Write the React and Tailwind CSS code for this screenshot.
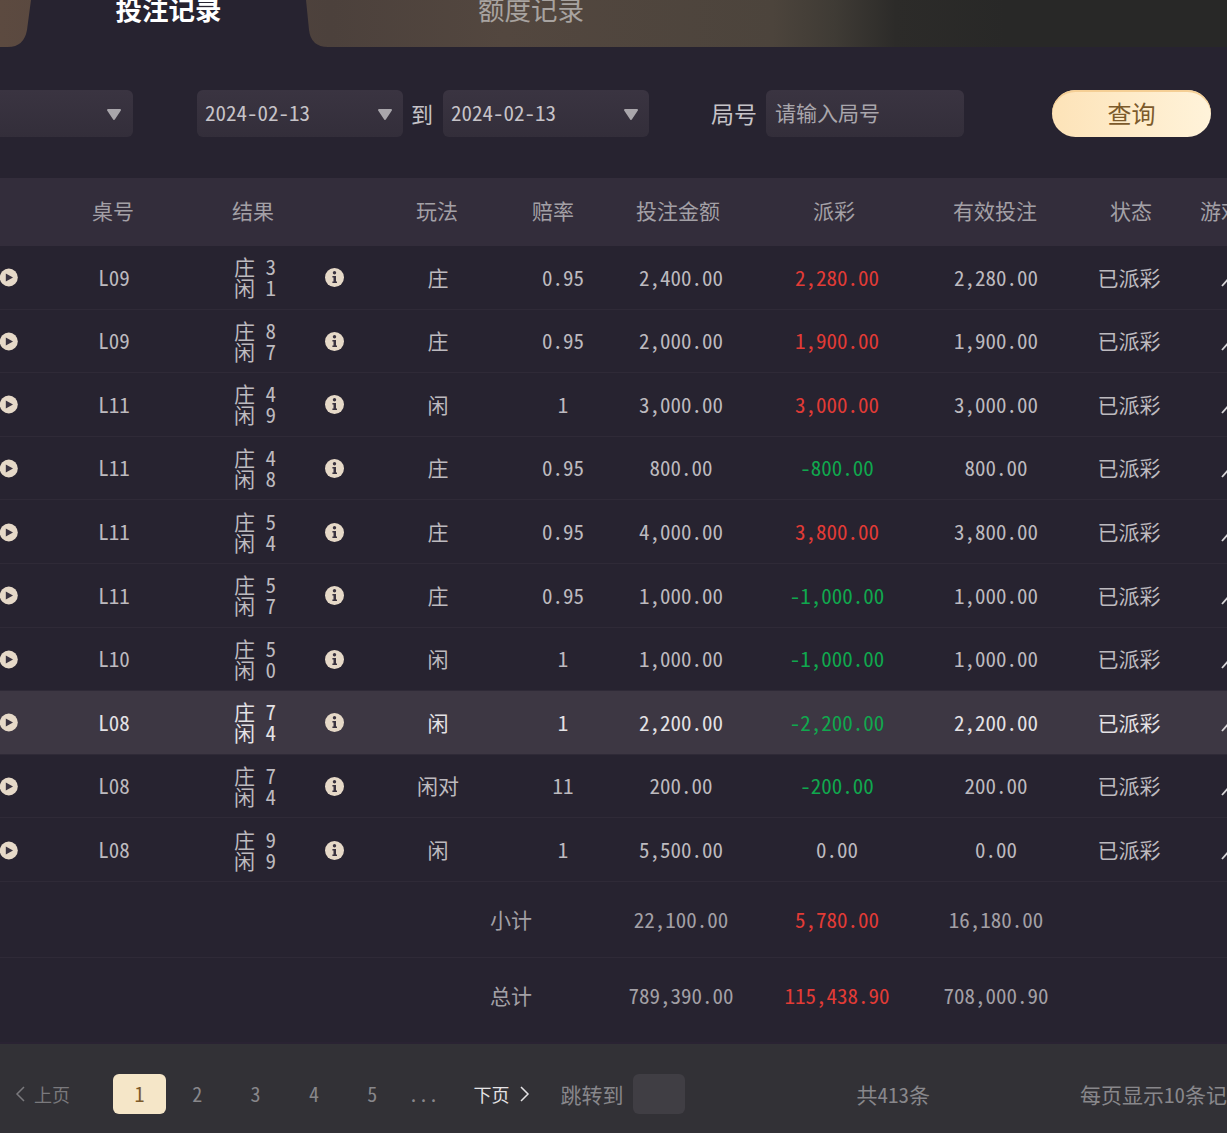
import React from "react";

const FONT = '"Noto Sans Mono CJK SC", "Noto Sans CJK SC", monospace';

const rows = [
  { table: "L09", bank: 3, player: 1, bet: "庄", odds: "0.95", amount: "2,400.00", payout: "2,280.00", valid: "2,280.00" },
  { table: "L09", bank: 8, player: 7, bet: "庄", odds: "0.95", amount: "2,000.00", payout: "1,900.00", valid: "1,900.00" },
  { table: "L11", bank: 4, player: 9, bet: "闲", odds: "1", amount: "3,000.00", payout: "3,000.00", valid: "3,000.00" },
  { table: "L11", bank: 4, player: 8, bet: "庄", odds: "0.95", amount: "800.00", payout: "-800.00", valid: "800.00" },
  { table: "L11", bank: 5, player: 4, bet: "庄", odds: "0.95", amount: "4,000.00", payout: "3,800.00", valid: "3,800.00" },
  { table: "L11", bank: 5, player: 7, bet: "庄", odds: "0.95", amount: "1,000.00", payout: "-1,000.00", valid: "1,000.00" },
  { table: "L10", bank: 5, player: 0, bet: "闲", odds: "1", amount: "1,000.00", payout: "-1,000.00", valid: "1,000.00" },
  { table: "L08", bank: 7, player: 4, bet: "闲", odds: "1", amount: "2,200.00", payout: "-2,200.00", valid: "2,200.00", active: true },
  { table: "L08", bank: 7, player: 4, bet: "闲对", odds: "11", amount: "200.00", payout: "-200.00", valid: "200.00" },
  { table: "L08", bank: 9, player: 9, bet: "闲", odds: "1", amount: "5,500.00", payout: "0.00", valid: "0.00" },
];

const payoutColor = (v) => {
  if (v.startsWith("-")) return "text-[#10a84e]";
  if (v === "0.00") return "";
  return "text-[#e23b36]";
};

const PlayIcon = () => (
  <svg width="19" height="19" viewBox="0 0 19 19" className="mt-px">
    <circle cx="8.8" cy="9.5" r="9" fill="#e6d9c8" />
    <path d="M5.8 5.4 L13 9.5 L5.8 13.6 Z" fill="#3a3340" />
  </svg>
);

const InfoIcon = () => (
  <svg width="19" height="19" viewBox="0 0 19 19" className="mt-px">
    <circle cx="9.5" cy="9.5" r="9.5" fill="#e6d9c8" />
    <circle cx="9.5" cy="4.8" r="1.7" fill="#3a3340" />
    <path d="M7.4 8 H11 V13.6 H12 V15 H7.4 V13.6 H8.5 V9.4 H7.4 Z" fill="#3a3340" />
  </svg>
);

const Arrow = () => (
  <svg width="10" height="20" viewBox="0 0 10 20" fill="none" stroke="#d8d5d8" strokeWidth="1.8">
    <path d="M1 19 L8 11" />
  </svg>
);

const Caret = () => (
  <svg width="16" height="13" viewBox="0 0 16 13" className="mt-[2px]">
    <path d="M2 2 H14 L8 11 Z" fill="#a9a6ab" stroke="#a9a6ab" strokeWidth="2" strokeLinejoin="round" />
  </svg>
);

const DateSelect = ({ value }) => (
  <div className="flex h-[47px] w-[206px] items-center justify-between rounded-md bg-gradient-to-b from-[#3a3441] to-[#332e3a] pl-2 pr-[10px] text-[21px] text-[#c6c3c8]">
    <span>{value}</span>
    <Caret />
  </div>
);

const Chevron = ({ dir, color }) => (
  <svg width="10" height="16" viewBox="0 0 10 16" fill="none" stroke={color} strokeWidth="1.5">
    <path d={dir === "left" ? "M9 1 L2 8 L9 15" : "M1 1 L8 8 L1 15"} />
  </svg>
);

const BODY_COLS = "grid-cols-[74px_80px_60px_80px_80px_128px_122px_114px_198px_120px_146px_58px]";
const HEAD_COLS = "grid-cols-[73px_80px_60px_80px_80px_128px_104px_146px_166px_156px_116px_11px_60px]";

export default function App() {
  return (
    <div
      className="h-[1133px] w-[1227px] overflow-hidden bg-[#272330] text-[21px]"
      style={{ fontFamily: FONT }}
    >
      {/* TABS */}
      <div className="relative flex h-[47px] bg-[linear-gradient(90deg,#5c4a40_0%,#4c413c_27%,#53473f_41%,#4c443c_63%,#3f3b35_68%,#2c2b29_73%,#282827_82%,#282827_100%)]">
        <div className="relative h-full w-[332px]">
          <svg className="absolute inset-0" width="332" height="47" viewBox="0 0 332 47">
            <path d="M31 0 L306 0 L309 30 Q311 47 328 47 L8 47 Q24 47 27 30 Z" fill="#272330" />
          </svg>
          <div className="relative flex h-[18px] items-center justify-center text-[26.5px] font-bold text-white pl-[5px]">
            投注记录
          </div>
        </div>
        <div className="flex h-[18px] w-[398px] items-center justify-center text-[26.5px] text-[#a8a3a0]">
          额度记录
        </div>
      </div>

      {/* FILTER */}
      <div className="flex h-[131px] items-center pt-[1px]">
        <div className="-ml-5 flex h-[47px] w-[153px] items-center justify-end rounded-md bg-gradient-to-b from-[#3a3441] to-[#332e3a] pr-[11px]">
          <Caret />
        </div>
        <div className="ml-16">
          <DateSelect value="2024-02-13" />
        </div>
        <span className="w-[38px] text-center text-[22px] text-[#c6c3c8]">到</span>
        <span className="w-[2px]" />
        <DateSelect value="2024-02-13" />
        <span className="ml-[62px] w-[46px] text-[23px] text-[#c6c3c8]">局号</span>
        <div className="ml-[9px] flex h-[47px] w-[198px] items-center rounded-md bg-gradient-to-b from-[#3a3441] to-[#332e3a] pl-[9px] text-[21px] text-[#a9a6ac]">
          请输入局号
        </div>
        <button className="ml-[88px] h-[47px] w-[159px] rounded-full bg-gradient-to-r from-[#fde3b8] to-[#fff3da] text-[24px] text-[#7c5a2b] shadow-[inset_0_2px_0_#f5cf95]">
          查询
        </button>
      </div>

      {/* TABLE HEAD */}
      <div className={`grid h-[68px] items-center bg-[#332d3b] pb-[2px] text-center text-[#a3a0a6] whitespace-nowrap ${HEAD_COLS}`}>
        <span />
        <span>桌号</span>
        <span />
        <span>结果</span>
        <span />
        <span>玩法</span>
        <span>赔率</span>
        <span>投注金额</span>
        <span>派彩</span>
        <span>有效投注</span>
        <span>状态</span>
        <span />
        <span className="text-left">游戏</span>
      </div>

      {/* TABLE BODY */}
      {rows.map((r, i) => (
        <div
          key={i}
          className={`grid h-[63.6px] items-center border-b border-[#2f2a37] text-center ${BODY_COLS} ${
            r.active ? "bg-[#3d3743] text-[#e4e2e5]" : "text-[#bdbabf]"
          }`}
        >
          <span className="flex justify-start">
            <PlayIcon />
          </span>
          <span>{r.table}</span>
          <span />
          <span className="pl-5 text-left leading-[21px] whitespace-pre">
            <span className="block">{`庄 ${r.bank}`}</span>
            <span className="block">{`闲 ${r.player}`}</span>
          </span>
          <span className="flex justify-center">
            <InfoIcon />
          </span>
          <span>{r.bet}</span>
          <span>{r.odds}</span>
          <span>{r.amount}</span>
          <span className={payoutColor(r.payout)}>{r.payout}</span>
          <span>{r.valid}</span>
          <span>已派彩</span>
          <span className="flex justify-start pl-[19px]">
            <Arrow />
          </span>
        </div>
      ))}

      {/* TOTALS */}
      <div className={`grid h-[76px] items-center border-b border-[#2f2a37] text-center text-[#a3a0a6] ${BODY_COLS}`}>
        <span className="col-span-5" />
        <span className="col-span-2 pl-6">小计</span>
        <span>22,100.00</span>
        <span className="text-[#e23b36]">5,780.00</span>
        <span>16,180.00</span>
      </div>
      <div className={`grid h-[84px] items-center pb-2 text-center text-[#a3a0a6] ${BODY_COLS}`}>
        <span className="col-span-5" />
        <span className="col-span-2 pl-6">总计</span>
        <span>789,390.00</span>
        <span className="text-[#e23b36]">115,438.90</span>
        <span>708,000.90</span>
      </div>

      {/* PAGINATION */}
      <div className="flex h-[91px] items-center border-t-2 border-[#2a2333] bg-[#323136] pt-[12px] text-[#88878b] whitespace-nowrap *:shrink-0">
        <div className="flex w-[113px] items-center gap-[9px] pl-[15px] text-[18px] text-[#7a797d]">
          <Chevron dir="left" color="#7a797d" />
          上页
        </div>
        <div className="flex h-10 w-[53px] items-center justify-center rounded-md bg-[#f5e6c8] text-[20px] text-[#7c5a2b]">
          1
        </div>
        <div className="ml-[2px] flex text-center text-[20px]">
          {[2, 3, 4, 5].map((n) => (
            <span key={n} className="w-[58.4px]">
              {n}
            </span>
          ))}
          <span className="w-[44px]">...</span>
        </div>
        <div className="ml-7 flex items-center gap-[10px] text-[18px] text-[#e4e3e5]">
          下页
          <Chevron dir="right" color="#e4e3e5" />
        </div>
        <span className="ml-[31px]">跳转到</span>
        <div className="ml-[9px] h-10 w-[52px] rounded-md bg-[#403e44]" />
        <span className="ml-[172px]">共413条</span>
        <span className="ml-[150px]">每页显示10条记录</span>
      </div>
    </div>
  );
}
